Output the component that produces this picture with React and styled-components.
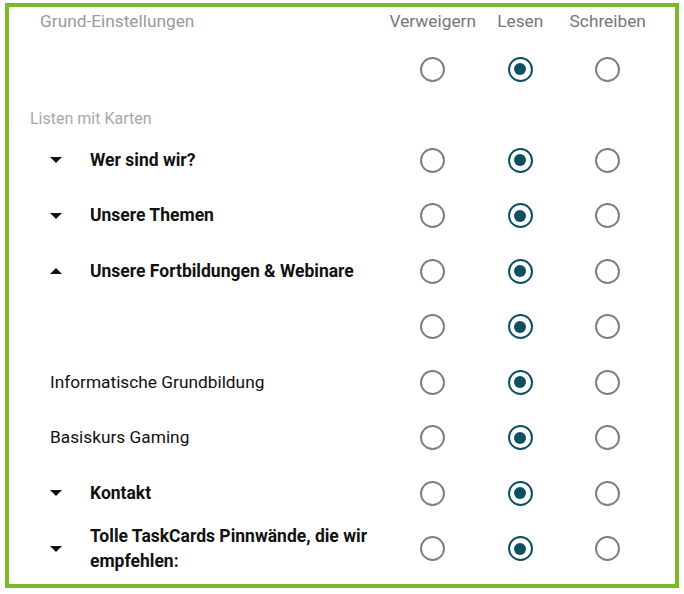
import React from "react";
import styled, { createGlobalStyle } from "styled-components";

const Global = createGlobalStyle`
  html, body { margin: 0; padding: 0; background: #ffffff; }
  body { font-family: Roboto, "Noto Sans", Arial, sans-serif; }
`;

const Page = styled.div`
  padding: 3px 5px 0 5px;
  width: 684px;
  box-sizing: border-box;
`;

const Card = styled.div`
  width: 674px;
  height: 585px;
  box-sizing: border-box;
  border: 4px solid #7cb72c;
  background: #fff;
  display: flex;
  flex-direction: column;
`;

const Grid = styled.div`
  display: grid;
  grid-template-columns: 380px repeat(3, 87.5px) 1fr;
  align-items: center;
  height: ${(p) => p.$h || "55.5px"};
`;

const HeaderTitle = styled.div`
  padding-left: 31px;
  font-size: 17.3px;
  color: #9a9a9a;
`;

const ColHead = styled.div`
  text-align: center;
  font-size: 17.3px;
  color: #777;
  white-space: nowrap;
`;

const Section = styled.div`
  padding: 12px 0 0 21px;
  height: 35.5px;
  box-sizing: border-box;
  font-size: 16px;
  line-height: 20px;
  color: #a8a8a8;
`;

const Label = styled.div`
  display: flex;
  align-items: center;
  padding-left: ${(p) => (p.$arrow ? "39px" : "41px")};
  font-size: ${(p) => (p.$bold ? "17.5px" : "17.3px")};
  line-height: 25px;
  font-weight: ${(p) => (p.$bold ? 700 : 400)};
  color: #111;
`;

const Arrow = styled.span`
  flex: none;
  width: 0;
  height: 0;
  border-left: 6.5px solid transparent;
  border-right: 6.5px solid transparent;
  ${(p) =>
    p.$up
      ? "border-bottom: 6px solid #111;"
      : "border-top: 6px solid #111;"}
  margin-right: 28px;
  margin-left: 2px;
`;

const Cell = styled.div`
  display: flex;
  justify-content: center;
  align-items: center;
`;

const Radio = styled.span`
  box-sizing: border-box;
  width: 25px;
  height: 25px;
  border-radius: 50%;
  border: 2px solid ${(p) => (p.$on ? "#0d5061" : "#7f7f7f")};
  display: flex;
  align-items: center;
  justify-content: center;
  &::after {
    content: "";
    display: ${(p) => (p.$on ? "block" : "none")};
    width: 12px;
    height: 12px;
    border-radius: 50%;
    background: #0d5061;
  }
`;

const rows = [
  { label: "Wer sind wir?", bold: true, arrow: "down" },
  { label: "Unsere Themen", bold: true, arrow: "down" },
  { label: "Unsere Fortbildungen & Webinare", bold: true, arrow: "up" },
  { label: "" },
  { label: "Informatische Grundbildung" },
  { label: "Basiskurs Gaming" },
  { label: "Kontakt", bold: true, arrow: "down" },
  { label: ["Tolle TaskCards Pinnwände, die wir", "empfehlen:"], bold: true, arrow: "down" },
];

function Radios({ value = 1 }) {
  return [0, 1, 2].map((i) => (
    <Cell key={i}>
      <Radio $on={i === value} />
    </Cell>
  ));
}

export default function App() {
  return (
    <>
      <Global />
      <Page>
        <Card>
          <Grid $h="28px">
            <HeaderTitle>Grund-Einstellungen</HeaderTitle>
            <ColHead>Verweigern</ColHead>
            <ColHead>Lesen</ColHead>
            <ColHead>Schreiben</ColHead>
          </Grid>
          <Grid style={{ marginTop: "6.25px" }}>
            <div />
            <Radios />
          </Grid>
          <Section>Listen mit Karten</Section>
          {rows.map((r, idx) => (
            <Grid key={idx}>
              <Label $bold={r.bold} $arrow={!!r.arrow}>
                {r.arrow && <Arrow $up={r.arrow === "up"} />}
                <span>
                  {Array.isArray(r.label)
                    ? r.label.map((l, i) => <div key={i}>{l}</div>)
                    : r.label}
                </span>
              </Label>
              <Radios />
            </Grid>
          ))}
        </Card>
      </Page>
    </>
  );
}
